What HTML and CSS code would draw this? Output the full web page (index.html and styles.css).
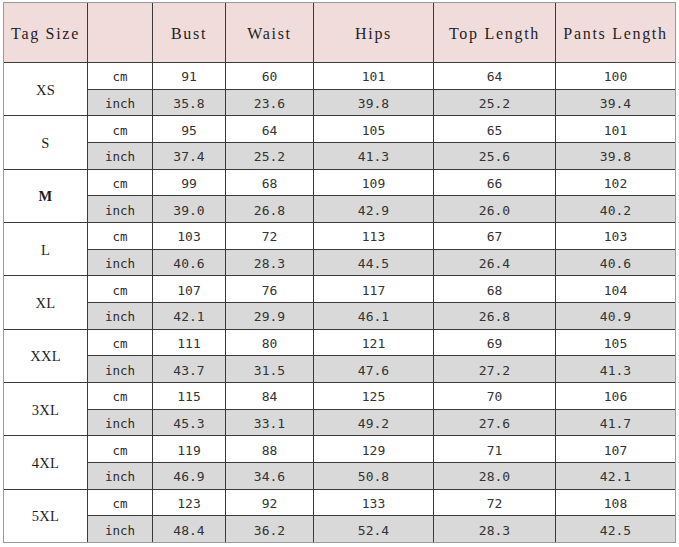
FILE: index.html
```html
<!DOCTYPE html>
<html>
<head>
<meta charset="utf-8">
<link rel="stylesheet" href="styles.css">
</head>
<body>
<div class="chart" id="chart">
  <div class="h first">Tag Size</div>
  <div class="h"></div>
  <div class="h">Bust</div>
  <div class="h">Waist</div>
  <div class="h">Hips</div>
  <div class="h">Top Length</div>
  <div class="h">Pants Length</div>
</div>
<script src="app.js"></script>
</body>
</html>
```
FILE: app.js
```js
const data = [
  ["XS", [91,60,101,64,100], ["35.8","23.6","39.8","25.2","39.4"]],
  ["S", [95,64,105,65,101], ["37.4","25.2","41.3","25.6","39.8"]],
  ["M", [99,68,109,66,102], ["39.0","26.8","42.9","26.0","40.2"]],
  ["L", [103,72,113,67,103], ["40.6","28.3","44.5","26.4","40.6"]],
  ["XL", [107,76,117,68,104], ["42.1","29.9","46.1","26.8","40.9"]],
  ["XXL", [111,80,121,69,105], ["43.7","31.5","47.6","27.2","41.3"]],
  ["3XL", [115,84,125,70,106], ["45.3","33.1","49.2","27.6","41.7"]],
  ["4XL", [119,88,129,71,107], ["46.9","34.6","50.8","28.0","42.1"]],
  ["5XL", [123,92,133,72,108], ["48.4","36.2","52.4","28.3","42.5"]]
];
const chart = document.getElementById("chart");
function cell(cls, text) {
  const d = document.createElement("div");
  d.className = cls;
  d.textContent = text;
  chart.appendChild(d);
  return d;
}
data.forEach(([size, cm, inch]) => {
  cell("size" + (size === "M" ? " size-m" : ""), size);
  cell("unit", "cm");
  cm.forEach(v => cell("num", v));
  cell("unit alt", "inch");
  inch.forEach(v => cell("num alt", v));
});
```
FILE: styles.css
```css
html, body {
  margin: 0;
  padding: 0;
  background: #ffffff;
}

.chart {
  box-sizing: border-box;
  margin: 2px 0 0 3px;
  width: 673px;
  height: 541px;
  display: grid;
  grid-template-columns: 83px 64px 72px 87px 119px 121px 119px;
  grid-template-rows: 59px repeat(18, 1fr);
  gap: 1px;
  background: #3a3a3a;
  border: 1px solid #9a9a9a;
}

.chart > div {
  display: flex;
  align-items: center;
  justify-content: center;
  background: #ffffff;
  color: #2b2b2b;
  box-sizing: border-box;
}

.h {
  background: #f1dcdc !important;
  font-family: "Liberation Serif", serif;
  font-size: 16px;
  letter-spacing: 1.7px;
  color: #1e1e1e !important;
  padding-top: 3px;
}

.size {
  grid-column: 1;
  grid-row: span 2;
  font-family: "Liberation Serif", serif;
  font-size: 14.5px;
  letter-spacing: 0.3px;
  color: #1e1e1e !important;
  padding-top: 2px;
}

.size-m {
  font-weight: bold;
}

.unit {
  font-family: "DejaVu Sans Mono", monospace;
  font-size: 12.5px;
  padding-top: 2px;
}

.num {
  font-family: "DejaVu Sans Mono", monospace;
  font-size: 13px;
  padding-top: 2px;
  color: #333333 !important;
}

.alt {
  background: #d9d9d9 !important;
}
```
